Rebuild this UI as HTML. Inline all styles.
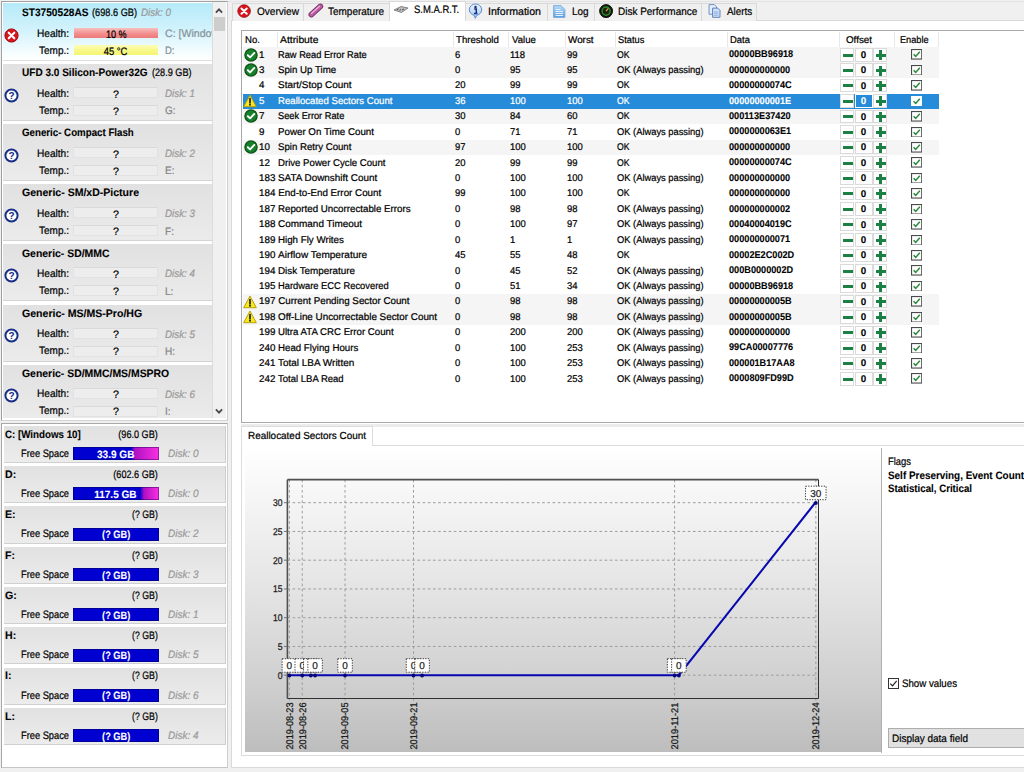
<!DOCTYPE html><html><head><meta charset="utf-8"><title>Hard Disk Sentinel</title><style>
*{box-sizing:border-box;margin:0;padding:0}
html,body{width:1024px;height:772px;overflow:hidden;background:#f0f0f0}
body{position:relative;text-rendering:geometricPrecision;font-family:"Liberation Sans",sans-serif;font-size:10px;color:#000;line-height:1}
.a{position:absolute}
.t{position:absolute;white-space:pre;line-height:12px;height:12px;-webkit-text-stroke:0.22px currentColor}
.b{font-weight:bold;-webkit-text-stroke:0.1px currentColor}
.i{font-style:italic;color:#9a9a9a}
</style></head><body>
<div class="a" style="left:1px;top:1px;width:227.2px;height:419.8px;background:#fff;border:1px solid #a0a0a0;border-right-color:#cfcfcf;border-bottom-color:#d4d4d4"></div>
<div class="a" style="left:0;top:0;width:211.600px;height:418.2px;overflow:hidden">
<div class="a" style="left:3px;top:3.0px;width:209px;height:58px;background:linear-gradient(#b5eaf9,#d4f3fc 50%,#f3fcfe 85%,#ffffff);border-bottom:1px solid #dedede"></div>
<div class="t b" style="left:21.50px;top:7.10px;font-size:10.8px;transform-origin:0 50%;transform:scaleX(0.939);">ST3750528AS</div>
<div class="t " style="left:92.00px;top:7.10px;font-size:10.8px;transform-origin:0 50%;transform:scaleX(0.852);">(698.6 GB)</div>
<div class="t i" style="left:141.00px;top:7.10px;font-size:10.8px;transform-origin:0 50%;transform:scaleX(0.909);">Disk: 0</div>
<div class="t " style="left:165.00px;top:27.90px;font-size:10.8px;transform-origin:0 50%;transform:scaleX(0.980);color:#86939a;">C: [Windows 10]</div>
<div class="t " style="left:165.00px;top:45.20px;font-size:10.8px;transform-origin:0 50%;transform:scaleX(0.880);color:#86939a;">D:</div>
<div class="t " style="left:36.50px;top:27.70px;font-size:10.8px;transform-origin:0 50%;transform:scaleX(0.935);">Health:</div>
<div class="t " style="left:38.50px;top:44.50px;font-size:10.8px;transform-origin:0 50%;transform:scaleX(0.926);">Temp.:</div>
<div class="a" style="left:73.7px;top:27.75px;width:84.3px;height:9.75px;background:linear-gradient(#f9c0c0,#f28e8e 55%,#ee7a7a)"></div>
<div class="a" style="left:73.7px;top:45.0px;width:84.3px;height:10px;background:linear-gradient(#fdfdb8,#f8f888 55%,#f5f572)"></div>
<div class="t " style="left:104.30px;top:28.60px;font-size:10.8px;transform-origin:50% 50%;transform:scaleX(0.843);">10 %</div>
<div class="t " style="left:102.04px;top:45.70px;font-size:10.8px;transform-origin:50% 50%;transform:scaleX(0.876);">45 °C</div>
<svg class="a" style="left:4.4px;top:27.5px" width="15" height="15" viewBox="0 0 15 15"><circle cx="7.5" cy="7.5" r="6.6" fill="#d8141c" stroke="#a00c12" stroke-width="1"/><path d="M4.7 4.7L10.3 10.3M10.3 4.7L4.7 10.3" stroke="#fff" stroke-width="2.1" stroke-linecap="round"/></svg>
<div class="a" style="left:3px;top:64.12px;width:209px;height:57px;background:linear-gradient(#e1e1e1,#ebebeb);border-bottom:1px solid #d4d4d4"></div>
<div class="t b" style="left:21.50px;top:67.22px;font-size:10.8px;transform-origin:0 50%;transform:scaleX(0.930);">UFD 3.0 Silicon-Power32G</div>
<div class="t " style="left:151.50px;top:67.22px;font-size:10.8px;transform-origin:0 50%;transform:scaleX(0.844);">(28.9 GB)</div>
<div class="t i" style="left:165.00px;top:88.02px;font-size:10.8px;transform-origin:0 50%;transform:scaleX(0.909);">Disk: 1</div>
<div class="t " style="left:165.00px;top:105.32px;font-size:10.8px;transform-origin:0 50%;transform:scaleX(0.930);color:#858585;">G:</div>
<div class="t " style="left:36.50px;top:87.82px;font-size:10.8px;transform-origin:0 50%;transform:scaleX(0.935);">Health:</div>
<div class="t " style="left:38.50px;top:104.62px;font-size:10.8px;transform-origin:0 50%;transform:scaleX(0.926);">Temp.:</div>
<div class="a" style="left:73px;top:87.12px;width:85px;height:11px;background:#ededed;border:1px solid #e2e2e2;border-top-color:#dadada"></div>
<div class="a" style="left:73px;top:105.12px;width:85px;height:11px;background:#ededed;border:1px solid #e2e2e2;border-top-color:#dadada"></div>
<div class="t " style="left:112.99px;top:88.72px;font-size:10.8px;">?</div>
<div class="t " style="left:112.99px;top:105.82px;font-size:10.8px;">?</div>
<svg class="a" style="left:4.4px;top:87.62px" width="15" height="15" viewBox="0 0 15 15"><circle cx="7.5" cy="7.5" r="6.1" fill="#fff" stroke="#182f86" stroke-width="2"/><text x="7.5" y="11.2" font-family="Liberation Sans,sans-serif" font-weight="bold" font-size="10" text-anchor="middle" fill="#182f86">?</text></svg>
<div class="a" style="left:3px;top:124.24px;width:209px;height:57px;background:linear-gradient(#e1e1e1,#ebebeb);border-bottom:1px solid #d4d4d4"></div>
<div class="t b" style="left:21.50px;top:127.34px;font-size:10.8px;transform-origin:0 50%;transform:scaleX(0.900);">Generic- Compact Flash</div>
<div class="t i" style="left:165.00px;top:148.14px;font-size:10.8px;transform-origin:0 50%;transform:scaleX(0.909);">Disk: 2</div>
<div class="t " style="left:165.00px;top:165.44px;font-size:10.8px;transform-origin:0 50%;transform:scaleX(0.930);color:#858585;">E:</div>
<div class="t " style="left:36.50px;top:147.94px;font-size:10.8px;transform-origin:0 50%;transform:scaleX(0.935);">Health:</div>
<div class="t " style="left:38.50px;top:164.74px;font-size:10.8px;transform-origin:0 50%;transform:scaleX(0.926);">Temp.:</div>
<div class="a" style="left:73px;top:147.24px;width:85px;height:11px;background:#ededed;border:1px solid #e2e2e2;border-top-color:#dadada"></div>
<div class="a" style="left:73px;top:165.24px;width:85px;height:11px;background:#ededed;border:1px solid #e2e2e2;border-top-color:#dadada"></div>
<div class="t " style="left:112.99px;top:148.84px;font-size:10.8px;">?</div>
<div class="t " style="left:112.99px;top:165.94px;font-size:10.8px;">?</div>
<svg class="a" style="left:4.4px;top:147.74px" width="15" height="15" viewBox="0 0 15 15"><circle cx="7.5" cy="7.5" r="6.1" fill="#fff" stroke="#182f86" stroke-width="2"/><text x="7.5" y="11.2" font-family="Liberation Sans,sans-serif" font-weight="bold" font-size="10" text-anchor="middle" fill="#182f86">?</text></svg>
<div class="a" style="left:3px;top:184.36px;width:209px;height:57px;background:linear-gradient(#e1e1e1,#ebebeb);border-bottom:1px solid #d4d4d4"></div>
<div class="t b" style="left:21.50px;top:187.46px;font-size:10.8px;transform-origin:0 50%;transform:scaleX(0.975);">Generic- SM/xD-Picture</div>
<div class="t i" style="left:165.00px;top:208.26px;font-size:10.8px;transform-origin:0 50%;transform:scaleX(0.909);">Disk: 3</div>
<div class="t " style="left:165.00px;top:225.56px;font-size:10.8px;transform-origin:0 50%;transform:scaleX(0.930);color:#858585;">F:</div>
<div class="t " style="left:36.50px;top:208.06px;font-size:10.8px;transform-origin:0 50%;transform:scaleX(0.935);">Health:</div>
<div class="t " style="left:38.50px;top:224.86px;font-size:10.8px;transform-origin:0 50%;transform:scaleX(0.926);">Temp.:</div>
<div class="a" style="left:73px;top:207.36px;width:85px;height:11px;background:#ededed;border:1px solid #e2e2e2;border-top-color:#dadada"></div>
<div class="a" style="left:73px;top:225.36px;width:85px;height:11px;background:#ededed;border:1px solid #e2e2e2;border-top-color:#dadada"></div>
<div class="t " style="left:112.99px;top:208.96px;font-size:10.8px;">?</div>
<div class="t " style="left:112.99px;top:226.06px;font-size:10.8px;">?</div>
<svg class="a" style="left:4.4px;top:207.86px" width="15" height="15" viewBox="0 0 15 15"><circle cx="7.5" cy="7.5" r="6.1" fill="#fff" stroke="#182f86" stroke-width="2"/><text x="7.5" y="11.2" font-family="Liberation Sans,sans-serif" font-weight="bold" font-size="10" text-anchor="middle" fill="#182f86">?</text></svg>
<div class="a" style="left:3px;top:244.48px;width:209px;height:57px;background:linear-gradient(#e1e1e1,#ebebeb);border-bottom:1px solid #d4d4d4"></div>
<div class="t b" style="left:21.50px;top:247.58px;font-size:10.8px;transform-origin:0 50%;transform:scaleX(0.966);">Generic- SD/MMC</div>
<div class="t i" style="left:165.00px;top:268.38px;font-size:10.8px;transform-origin:0 50%;transform:scaleX(0.909);">Disk: 4</div>
<div class="t " style="left:165.00px;top:285.68px;font-size:10.8px;transform-origin:0 50%;transform:scaleX(0.930);color:#858585;">L:</div>
<div class="t " style="left:36.50px;top:268.18px;font-size:10.8px;transform-origin:0 50%;transform:scaleX(0.935);">Health:</div>
<div class="t " style="left:38.50px;top:284.98px;font-size:10.8px;transform-origin:0 50%;transform:scaleX(0.926);">Temp.:</div>
<div class="a" style="left:73px;top:267.48px;width:85px;height:11px;background:#ededed;border:1px solid #e2e2e2;border-top-color:#dadada"></div>
<div class="a" style="left:73px;top:285.48px;width:85px;height:11px;background:#ededed;border:1px solid #e2e2e2;border-top-color:#dadada"></div>
<div class="t " style="left:112.99px;top:269.08px;font-size:10.8px;">?</div>
<div class="t " style="left:112.99px;top:286.18px;font-size:10.8px;">?</div>
<svg class="a" style="left:4.4px;top:267.98px" width="15" height="15" viewBox="0 0 15 15"><circle cx="7.5" cy="7.5" r="6.1" fill="#fff" stroke="#182f86" stroke-width="2"/><text x="7.5" y="11.2" font-family="Liberation Sans,sans-serif" font-weight="bold" font-size="10" text-anchor="middle" fill="#182f86">?</text></svg>
<div class="a" style="left:3px;top:304.6px;width:209px;height:57px;background:linear-gradient(#e1e1e1,#ebebeb);border-bottom:1px solid #d4d4d4"></div>
<div class="t b" style="left:21.50px;top:307.70px;font-size:10.8px;transform-origin:0 50%;transform:scaleX(0.977);">Generic- MS/MS-Pro/HG</div>
<div class="t i" style="left:165.00px;top:328.50px;font-size:10.8px;transform-origin:0 50%;transform:scaleX(0.909);">Disk: 5</div>
<div class="t " style="left:165.00px;top:345.80px;font-size:10.8px;transform-origin:0 50%;transform:scaleX(0.930);color:#858585;">H:</div>
<div class="t " style="left:36.50px;top:328.30px;font-size:10.8px;transform-origin:0 50%;transform:scaleX(0.935);">Health:</div>
<div class="t " style="left:38.50px;top:345.10px;font-size:10.8px;transform-origin:0 50%;transform:scaleX(0.926);">Temp.:</div>
<div class="a" style="left:73px;top:327.6px;width:85px;height:11px;background:#ededed;border:1px solid #e2e2e2;border-top-color:#dadada"></div>
<div class="a" style="left:73px;top:345.6px;width:85px;height:11px;background:#ededed;border:1px solid #e2e2e2;border-top-color:#dadada"></div>
<div class="t " style="left:112.99px;top:329.20px;font-size:10.8px;">?</div>
<div class="t " style="left:112.99px;top:346.30px;font-size:10.8px;">?</div>
<svg class="a" style="left:4.4px;top:328.1px" width="15" height="15" viewBox="0 0 15 15"><circle cx="7.5" cy="7.5" r="6.1" fill="#fff" stroke="#182f86" stroke-width="2"/><text x="7.5" y="11.2" font-family="Liberation Sans,sans-serif" font-weight="bold" font-size="10" text-anchor="middle" fill="#182f86">?</text></svg>
<div class="a" style="left:3px;top:364.72px;width:209px;height:57px;background:linear-gradient(#e1e1e1,#ebebeb);border-bottom:1px solid #d4d4d4"></div>
<div class="t b" style="left:21.50px;top:367.82px;font-size:10.8px;transform-origin:0 50%;transform:scaleX(0.966);">Generic- SD/MMC/MS/MSPRO</div>
<div class="t i" style="left:165.00px;top:388.62px;font-size:10.8px;transform-origin:0 50%;transform:scaleX(0.909);">Disk: 6</div>
<div class="t " style="left:165.00px;top:405.92px;font-size:10.8px;transform-origin:0 50%;transform:scaleX(0.930);color:#858585;">I:</div>
<div class="t " style="left:36.50px;top:388.42px;font-size:10.8px;transform-origin:0 50%;transform:scaleX(0.935);">Health:</div>
<div class="t " style="left:38.50px;top:405.22px;font-size:10.8px;transform-origin:0 50%;transform:scaleX(0.926);">Temp.:</div>
<div class="a" style="left:73px;top:387.72px;width:85px;height:11px;background:#ededed;border:1px solid #e2e2e2;border-top-color:#dadada"></div>
<div class="a" style="left:73px;top:405.72px;width:85px;height:11px;background:#ededed;border:1px solid #e2e2e2;border-top-color:#dadada"></div>
<div class="t " style="left:112.99px;top:389.32px;font-size:10.8px;">?</div>
<div class="t " style="left:112.99px;top:406.42px;font-size:10.8px;">?</div>
<svg class="a" style="left:4.4px;top:388.22px" width="15" height="15" viewBox="0 0 15 15"><circle cx="7.5" cy="7.5" r="6.1" fill="#fff" stroke="#182f86" stroke-width="2"/><text x="7.5" y="11.2" font-family="Liberation Sans,sans-serif" font-weight="bold" font-size="10" text-anchor="middle" fill="#182f86">?</text></svg>
</div>
<div class="a" style="left:211.8px;top:2px;width:14.3px;height:416.2px;background:#f0f0f0;border-left:1px solid #dcdcdc"></div>
<div class="a" style="left:213.5px;top:17.2px;width:11.8px;height:14px;background:#cdcdcd"></div>
<svg class="a" style="left:214px;top:6.5px" width="10" height="8" viewBox="0 0 10 8"><path d="M1.900 5.600L5 2.400L8.100 5.600" fill="none" stroke="#484848" stroke-width="1.800"/></svg>
<svg class="a" style="left:214px;top:407.3px" width="10" height="8" viewBox="0 0 10 8"><path d="M1.900 2.400L5 5.600L8.100 2.400" fill="none" stroke="#484848" stroke-width="1.800"/></svg>
<div class="a" style="left:1px;top:422.7px;width:227.2px;height:345.3px;background:#fff;border:1px solid #a8a8a8;border-right-color:#cfcfcf;border-bottom-color:#c4c4c4"></div>
<div class="a" style="left:3.5px;top:425.7px;width:222.5px;height:37.3px;background:linear-gradient(#e1e1e1,#ececec);border-bottom:1px solid #d0d0d0;border-right:1px solid #cdcdcd"></div>
<div class="t b" style="left:5.20px;top:428.60px;font-size:10.8px;transform-origin:0 50%;transform:scaleX(0.903);">C: [Windows 10]</div>
<div class="t " style="left:111.44px;top:428.60px;font-size:10.8px;transform-origin:100% 50%;transform:scaleX(0.844);">(96.0 GB)</div>
<div class="t " style="left:20.50px;top:447.75px;font-size:10.8px;transform-origin:0 50%;transform:scaleX(0.860);">Free Space</div>
<div class="a" style="left:73px;top:447.0px;width:85.5px;height:13px;background:linear-gradient(90deg,#0000d0 0,#0000d0 58px,#b010c4 62px,#f830e0 85.500px);box-shadow:inset 0 0 0 1px rgba(0,0,70,.4)"></div>
<div class="t b" style="left:96.02px;top:448.60px;font-size:10.6px;transform-origin:50% 50%;transform:scaleX(0.950);color:#fff;">33.9 GB</div>
<div class="t i" style="left:167.50px;top:447.75px;font-size:10.8px;transform-origin:0 50%;transform:scaleX(0.924);">Disk: 0</div>
<div class="a" style="left:3.5px;top:466.0px;width:222.5px;height:37.3px;background:linear-gradient(#e1e1e1,#ececec);border-bottom:1px solid #d0d0d0;border-right:1px solid #cdcdcd"></div>
<div class="t b" style="left:5.20px;top:468.90px;font-size:10.8px;transform-origin:0 50%;transform:scaleX(0.980);">D:</div>
<div class="t " style="left:105.44px;top:468.90px;font-size:10.8px;transform-origin:100% 50%;transform:scaleX(0.843);">(602.6 GB)</div>
<div class="t " style="left:20.50px;top:488.05px;font-size:10.8px;transform-origin:0 50%;transform:scaleX(0.860);">Free Space</div>
<div class="a" style="left:73px;top:487.3px;width:85.5px;height:13px;background:linear-gradient(90deg,#0000d0 0,#0000d0 67px,#b010c4 71px,#f830e0 85.500px);box-shadow:inset 0 0 0 1px rgba(0,0,70,.4)"></div>
<div class="t b" style="left:93.37px;top:488.90px;font-size:10.6px;transform-origin:50% 50%;transform:scaleX(0.949);color:#fff;">117.5 GB</div>
<div class="t i" style="left:167.50px;top:488.05px;font-size:10.8px;transform-origin:0 50%;transform:scaleX(0.924);">Disk: 0</div>
<div class="a" style="left:3.5px;top:506.3px;width:222.5px;height:37.3px;background:linear-gradient(#e1e1e1,#ececec);border-bottom:1px solid #d0d0d0;border-right:1px solid #cdcdcd"></div>
<div class="t b" style="left:5.20px;top:509.20px;font-size:10.8px;transform-origin:0 50%;transform:scaleX(0.980);">E:</div>
<div class="t " style="left:126.45px;top:509.20px;font-size:10.8px;transform-origin:100% 50%;transform:scaleX(0.810);">(? GB)</div>
<div class="t " style="left:20.50px;top:528.35px;font-size:10.8px;transform-origin:0 50%;transform:scaleX(0.860);">Free Space</div>
<div class="a" style="left:73px;top:527.6px;width:85.5px;height:13px;background:#0000d0;box-shadow:inset 0 0 0 1px rgba(0,0,70,.4)"></div>
<div class="t b" style="left:99.56px;top:529.20px;font-size:10.6px;transform-origin:50% 50%;transform:scaleX(0.873);color:#fff;">(? GB)</div>
<div class="t i" style="left:167.50px;top:528.35px;font-size:10.8px;transform-origin:0 50%;transform:scaleX(0.924);">Disk: 2</div>
<div class="a" style="left:3.5px;top:546.6px;width:222.5px;height:37.3px;background:linear-gradient(#e1e1e1,#ececec);border-bottom:1px solid #d0d0d0;border-right:1px solid #cdcdcd"></div>
<div class="t b" style="left:5.20px;top:549.50px;font-size:10.8px;transform-origin:0 50%;transform:scaleX(0.980);">F:</div>
<div class="t " style="left:126.45px;top:549.50px;font-size:10.8px;transform-origin:100% 50%;transform:scaleX(0.810);">(? GB)</div>
<div class="t " style="left:20.50px;top:568.65px;font-size:10.8px;transform-origin:0 50%;transform:scaleX(0.860);">Free Space</div>
<div class="a" style="left:73px;top:567.9px;width:85.5px;height:13px;background:#0000d0;box-shadow:inset 0 0 0 1px rgba(0,0,70,.4)"></div>
<div class="t b" style="left:99.56px;top:569.50px;font-size:10.6px;transform-origin:50% 50%;transform:scaleX(0.873);color:#fff;">(? GB)</div>
<div class="t i" style="left:167.50px;top:568.65px;font-size:10.8px;transform-origin:0 50%;transform:scaleX(0.924);">Disk: 3</div>
<div class="a" style="left:3.5px;top:586.9000000000001px;width:222.5px;height:37.3px;background:linear-gradient(#e1e1e1,#ececec);border-bottom:1px solid #d0d0d0;border-right:1px solid #cdcdcd"></div>
<div class="t b" style="left:5.20px;top:589.80px;font-size:10.8px;transform-origin:0 50%;transform:scaleX(0.980);">G:</div>
<div class="t " style="left:126.45px;top:589.80px;font-size:10.8px;transform-origin:100% 50%;transform:scaleX(0.810);">(? GB)</div>
<div class="t " style="left:20.50px;top:608.95px;font-size:10.8px;transform-origin:0 50%;transform:scaleX(0.860);">Free Space</div>
<div class="a" style="left:73px;top:608.2px;width:85.5px;height:13px;background:#0000d0;box-shadow:inset 0 0 0 1px rgba(0,0,70,.4)"></div>
<div class="t b" style="left:99.56px;top:609.80px;font-size:10.6px;transform-origin:50% 50%;transform:scaleX(0.873);color:#fff;">(? GB)</div>
<div class="t i" style="left:167.50px;top:608.95px;font-size:10.8px;transform-origin:0 50%;transform:scaleX(0.924);">Disk: 1</div>
<div class="a" style="left:3.5px;top:627.2px;width:222.5px;height:37.3px;background:linear-gradient(#e1e1e1,#ececec);border-bottom:1px solid #d0d0d0;border-right:1px solid #cdcdcd"></div>
<div class="t b" style="left:5.20px;top:630.10px;font-size:10.8px;transform-origin:0 50%;transform:scaleX(0.980);">H:</div>
<div class="t " style="left:126.45px;top:630.10px;font-size:10.8px;transform-origin:100% 50%;transform:scaleX(0.810);">(? GB)</div>
<div class="t " style="left:20.50px;top:649.25px;font-size:10.8px;transform-origin:0 50%;transform:scaleX(0.860);">Free Space</div>
<div class="a" style="left:73px;top:648.5px;width:85.5px;height:13px;background:#0000d0;box-shadow:inset 0 0 0 1px rgba(0,0,70,.4)"></div>
<div class="t b" style="left:99.56px;top:650.10px;font-size:10.6px;transform-origin:50% 50%;transform:scaleX(0.873);color:#fff;">(? GB)</div>
<div class="t i" style="left:167.50px;top:649.25px;font-size:10.8px;transform-origin:0 50%;transform:scaleX(0.924);">Disk: 5</div>
<div class="a" style="left:3.5px;top:667.5px;width:222.5px;height:37.3px;background:linear-gradient(#e1e1e1,#ececec);border-bottom:1px solid #d0d0d0;border-right:1px solid #cdcdcd"></div>
<div class="t b" style="left:5.20px;top:670.40px;font-size:10.8px;transform-origin:0 50%;transform:scaleX(0.980);">I:</div>
<div class="t " style="left:126.45px;top:670.40px;font-size:10.8px;transform-origin:100% 50%;transform:scaleX(0.810);">(? GB)</div>
<div class="t " style="left:20.50px;top:689.55px;font-size:10.8px;transform-origin:0 50%;transform:scaleX(0.860);">Free Space</div>
<div class="a" style="left:73px;top:688.8px;width:85.5px;height:13px;background:#0000d0;box-shadow:inset 0 0 0 1px rgba(0,0,70,.4)"></div>
<div class="t b" style="left:99.56px;top:690.40px;font-size:10.6px;transform-origin:50% 50%;transform:scaleX(0.873);color:#fff;">(? GB)</div>
<div class="t i" style="left:167.50px;top:689.55px;font-size:10.8px;transform-origin:0 50%;transform:scaleX(0.924);">Disk: 6</div>
<div class="a" style="left:3.5px;top:707.8px;width:222.5px;height:37.3px;background:linear-gradient(#e1e1e1,#ececec);border-bottom:1px solid #d0d0d0;border-right:1px solid #cdcdcd"></div>
<div class="t b" style="left:5.20px;top:710.70px;font-size:10.8px;transform-origin:0 50%;transform:scaleX(0.980);">L:</div>
<div class="t " style="left:126.45px;top:710.70px;font-size:10.8px;transform-origin:100% 50%;transform:scaleX(0.810);">(? GB)</div>
<div class="t " style="left:20.50px;top:729.85px;font-size:10.8px;transform-origin:0 50%;transform:scaleX(0.860);">Free Space</div>
<div class="a" style="left:73px;top:729.0999999999999px;width:85.5px;height:13px;background:#0000d0;box-shadow:inset 0 0 0 1px rgba(0,0,70,.4)"></div>
<div class="t b" style="left:99.56px;top:730.70px;font-size:10.6px;transform-origin:50% 50%;transform:scaleX(0.873);color:#fff;">(? GB)</div>
<div class="t i" style="left:167.50px;top:729.85px;font-size:10.8px;transform-origin:0 50%;transform:scaleX(0.924);">Disk: 4</div>
<div class="a" style="left:228px;top:0px;width:796px;height:772px;background:#f0f0f0"></div>
<div class="a" style="left:228px;top:1px;width:796px;height:1px;background:#e3e3e3"></div>
<div class="a" style="left:230.5px;top:20px;width:800px;height:748px;background:#fff;border:1px solid #d9d9d9"></div>
<div class="a" style="left:232px;top:3px;width:72px;height:17.5px;background:#f0f0f0;border:1px solid #d9d9d9;border-bottom:none"></div>
<div class="t " style="left:256.50px;top:5.50px;font-size:10.8px;transform-origin:0 50%;transform:scaleX(0.933);">Overview</div>
<div class="a" style="left:303px;top:3px;width:87px;height:17.5px;background:#f0f0f0;border:1px solid #d9d9d9;border-bottom:none"></div>
<div class="t " style="left:328.00px;top:5.50px;font-size:10.8px;transform-origin:0 50%;transform:scaleX(0.924);">Temperature</div>
<div class="a" style="left:388.5px;top:0.5px;width:77.0px;height:20.5px;background:#fff;border:1px solid #d9d9d9;border-bottom:none"></div>
<div class="t " style="left:413.70px;top:4.00px;font-size:10.8px;transform-origin:0 50%;transform:scaleX(0.876);">S.M.A.R.T.</div>
<div class="a" style="left:465px;top:3px;width:82.5px;height:17.5px;background:#f0f0f0;border:1px solid #d9d9d9;border-bottom:none"></div>
<div class="t " style="left:488.00px;top:5.50px;font-size:10.8px;transform-origin:0 50%;transform:scaleX(0.981);">Information</div>
<div class="a" style="left:546.5px;top:3px;width:48.0px;height:17.5px;background:#f0f0f0;border:1px solid #d9d9d9;border-bottom:none"></div>
<div class="t " style="left:571.50px;top:5.50px;font-size:10.8px;transform-origin:0 50%;transform:scaleX(0.916);">Log</div>
<div class="a" style="left:593.5px;top:3px;width:108.0px;height:17.5px;background:#f0f0f0;border:1px solid #d9d9d9;border-bottom:none"></div>
<div class="t " style="left:618.00px;top:5.50px;font-size:10.8px;transform-origin:0 50%;transform:scaleX(0.924);">Disk Performance</div>
<div class="a" style="left:700.5px;top:3px;width:56.5px;height:17.5px;background:#f0f0f0;border:1px solid #d9d9d9;border-bottom:none"></div>
<div class="t " style="left:727.00px;top:5.50px;font-size:10.8px;transform-origin:0 50%;transform:scaleX(0.913);">Alerts</div>
<svg class="a" style="left:237.3px;top:3.6px" width="14.2" height="14.2" viewBox="0 0 15 15"><circle cx="7.5" cy="7.5" r="6.6" fill="#d8141c" stroke="#a00c12" stroke-width="1"/><path d="M4.7 4.7L10.3 10.3M10.3 4.7L4.7 10.3" stroke="#fff" stroke-width="2.1" stroke-linecap="round"/></svg>
<svg class="a" style="left:307px;top:2px" width="18" height="17" viewBox="0 0 18 17"><path d="M4.3 12.6L13.4 4.4" stroke="#7a3468" stroke-width="5.6" stroke-linecap="round"/><path d="M4.3 12.6L13.4 4.4" stroke="#c05ca6" stroke-width="3.8" stroke-linecap="round"/><path d="M4.6 11.2L12.4 4.2" stroke="#e8b4dc" stroke-width="1.3" stroke-linecap="round"/></svg>
<svg class="a" style="left:393px;top:4px" width="16" height="10" viewBox="0 0 16 10"><path d="M1 6L8 2.5L15 4L8.5 8.5z" fill="#bdbdbd" stroke="#6e6e6e" stroke-width=".8"/><path d="M4 5.7l1.5-.7M6.5 6.3l1.5-.8M9 6l2-1" stroke="#444" stroke-width=".9"/></svg>
<svg class="a" style="left:468.3px;top:2.6px" width="15" height="16" viewBox="0 0 15 16"><defs><linearGradient id="ig" x1="0" y1="0" x2="0" y2="1"><stop offset="0" stop-color="#eef6ff"/><stop offset="1" stop-color="#9cc4f0"/></linearGradient></defs><path d="M7.5 1A6.2 5.7 0 0 1 8.8 12.27L7.3 15.3L6.2 12.27A6.2 5.7 0 0 1 7.5 1z" fill="url(#ig)" stroke="#5a8ad0" stroke-width="1"/><circle cx="7.5" cy="3.900" r="1.250" fill="#14307c"/><path d="M6.200 6.100h2.100v4.300M6 10.500h3.400" stroke="#14307c" stroke-width="1.500" fill="none"/></svg>
<svg class="a" style="left:553px;top:5.3px" width="12.500" height="13" viewBox="0 0 12.500 13"><defs><linearGradient id="lg" x1="0" y1="0" x2="0" y2="1"><stop offset="0" stop-color="#b8dcf6"/><stop offset="1" stop-color="#5c9ce0"/></linearGradient></defs><path d="M.6 .6h7.400l3.900 3.900v7.900H.6z" fill="url(#lg)" stroke="#74a8e0" stroke-width=".9"/><path d="M2.500 4.500h5M2.500 6.500h7.500M2.500 8.500h7.500M2.500 10.500h7.500" stroke="#e4f0fc" stroke-width="1"/></svg>
<svg class="a" style="left:598.600px;top:3.600px" width="14.200" height="14.200" viewBox="0 0 16 16"><circle cx="8" cy="8" r="7.300" fill="#10180c" stroke="#050505" stroke-width="1"/><circle cx="8" cy="8" r="4.600" fill="#18240f" stroke="#2c8a30" stroke-width="1.600"/><path d="M8 8L10.500 5" stroke="#f0a040" stroke-width="1.300"/></svg>
<svg class="a" style="left:708px;top:4.200px" width="13.500" height="14" viewBox="0 0 15 16"><path d="M1 .7h6l2.500 2.500v8.500H1z" fill="#e4eefa" stroke="#6a8cc4" stroke-width="1.100"/><path d="M5 4.700h6l2.500 2.500v8H5z" fill="#cfe0f6" stroke="#5a80bc" stroke-width="1.100"/><path d="M6.500 9h5M6.500 11h5M6.500 13h5" stroke="#8ab0e4" stroke-width="1"/></svg>
<div class="a" style="left:241px;top:30px;width:800px;height:392.5px;background:#fff;border:1px solid #a8a8a8"></div>
<div class="t " style="left:245.00px;top:35.10px;font-size:9.8px;transform-origin:0 50%;transform:scaleX(0.972);">No.</div>
<div class="t " style="left:280.00px;top:35.10px;font-size:9.8px;transform-origin:0 50%;transform:scaleX(1.055);">Attribute</div>
<div class="t " style="left:456.00px;top:35.10px;font-size:9.8px;transform-origin:0 50%;transform:scaleX(0.983);">Threshold</div>
<div class="t " style="left:511.50px;top:35.10px;font-size:9.8px;transform-origin:0 50%;transform:scaleX(0.981);">Value</div>
<div class="t " style="left:568.00px;top:35.10px;font-size:9.8px;transform-origin:0 50%;transform:scaleX(1.007);">Worst</div>
<div class="t " style="left:617.50px;top:35.10px;font-size:9.8px;transform-origin:0 50%;transform:scaleX(0.948);">Status</div>
<div class="t " style="left:730.00px;top:35.10px;font-size:9.8px;transform-origin:0 50%;transform:scaleX(0.960);">Data</div>
<div class="t " style="left:846.00px;top:35.10px;font-size:9.8px;">Offset</div>
<div class="t " style="left:900.00px;top:35.10px;font-size:9.8px;transform-origin:0 50%;transform:scaleX(0.937);">Enable</div>
<div class="a" style="left:277px;top:32px;width:1px;height:14.5px;background:#e8e8e8"></div>
<div class="a" style="left:453px;top:32px;width:1px;height:14.5px;background:#e8e8e8"></div>
<div class="a" style="left:508px;top:32px;width:1px;height:14.5px;background:#e8e8e8"></div>
<div class="a" style="left:565px;top:32px;width:1px;height:14.5px;background:#e8e8e8"></div>
<div class="a" style="left:615px;top:32px;width:1px;height:14.5px;background:#e8e8e8"></div>
<div class="a" style="left:727px;top:32px;width:1px;height:14.5px;background:#e8e8e8"></div>
<div class="a" style="left:839px;top:32px;width:1px;height:14.5px;background:#e8e8e8"></div>
<div class="a" style="left:894px;top:32px;width:1px;height:14.5px;background:#e8e8e8"></div>
<div class="a" style="left:938px;top:32px;width:1px;height:14.5px;background:#e8e8e8"></div>
<div class="a" style="left:243px;top:47.0px;width:696px;height:15.43px;background:#f5f5f5"></div>
<svg class="a" style="left:243.5px;top:47.5px" width="14" height="14" viewBox="0 0 14 14"><circle cx="7" cy="7" r="6.1" fill="#17802a" stroke="#0b5316" stroke-width="1.3"/><path d="M3.800 7.200L6.100 9.400L10.300 4.900" fill="none" stroke="#fff" stroke-width="1.9" stroke-linecap="round" stroke-linejoin="round"/></svg>
<div class="t " style="left:259.00px;top:49.50px;font-size:9.8px;">1</div>
<div class="t " style="left:278.30px;top:49.50px;font-size:9.8px;transform-origin:0 50%;transform:scaleX(0.947);">Raw Read Error Rate</div>
<div class="t " style="left:454.70px;top:49.50px;font-size:9.8px;transform-origin:0 50%;transform:scaleX(0.965);">6</div>
<div class="t " style="left:510.30px;top:49.50px;font-size:9.8px;transform-origin:0 50%;transform:scaleX(0.965);">118</div>
<div class="t " style="left:566.80px;top:49.50px;font-size:9.8px;transform-origin:0 50%;transform:scaleX(0.965);">99</div>
<div class="t " style="left:616.80px;top:49.50px;font-size:9.8px;transform-origin:0 50%;transform:scaleX(0.885);">OK</div>
<div class="t b" style="left:728.80px;top:49.30px;font-size:9.8px;transform-origin:0 50%;transform:scaleX(0.935);">00000BB96918</div>
<div class="a" style="left:840px;top:48.0px;width:14px;height:13.5px;background:#fff;border:1px solid #dadada"><div class="a" style="left:1.5px;top:4.6px;width:10px;height:3px;background:#1b8044"></div></div>
<div class="a" style="left:854.5px;top:48.0px;width:18px;height:13.5px;background:#fff;border:1px solid #dadada;"></div>
<div class="t b" style="left:860.77px;top:49.80px;font-size:9.8px;">0</div>
<div class="a" style="left:873px;top:48.0px;width:14px;height:13.5px;background:#fff;border:1px solid #dadada"><div class="a" style="left:1.5px;top:4.6px;width:10px;height:3px;background:#1b8044"></div><div class="a" style="left:5px;top:1.1px;width:3px;height:10px;background:#1b8044"></div></div>
<svg class="a" style="left:910.6px;top:49.4px" width="11.3" height="10.6" viewBox="0 0 11.3 10.6"><rect x=".55" y=".55" width="10.2" height="9.5" fill="#fff" stroke="#4a4a4a" stroke-width="1.1"/><path d="M2.6 5.3L4.7 7.4L8.8 2.8" fill="none" stroke="#2a8a3a" stroke-width="1.5"/></svg>
<div class="a" style="left:243px;top:62.43px;width:696px;height:15.43px;background:#f5f5f5"></div>
<svg class="a" style="left:243.5px;top:62.93px" width="14" height="14" viewBox="0 0 14 14"><circle cx="7" cy="7" r="6.1" fill="#17802a" stroke="#0b5316" stroke-width="1.3"/><path d="M3.800 7.200L6.100 9.400L10.300 4.900" fill="none" stroke="#fff" stroke-width="1.9" stroke-linecap="round" stroke-linejoin="round"/></svg>
<div class="t " style="left:259.00px;top:64.93px;font-size:9.8px;">3</div>
<div class="t " style="left:278.30px;top:64.93px;font-size:9.8px;transform-origin:0 50%;transform:scaleX(0.988);">Spin Up Time</div>
<div class="t " style="left:454.70px;top:64.93px;font-size:9.8px;transform-origin:0 50%;transform:scaleX(0.965);">0</div>
<div class="t " style="left:510.30px;top:64.93px;font-size:9.8px;transform-origin:0 50%;transform:scaleX(0.965);">95</div>
<div class="t " style="left:566.80px;top:64.93px;font-size:9.8px;transform-origin:0 50%;transform:scaleX(0.965);">95</div>
<div class="t " style="left:616.80px;top:64.93px;font-size:9.8px;transform-origin:0 50%;transform:scaleX(0.952);">OK (Always passing)</div>
<div class="t b" style="left:728.80px;top:64.73px;font-size:9.8px;transform-origin:0 50%;transform:scaleX(0.935);">000000000000</div>
<div class="a" style="left:840px;top:63.43px;width:14px;height:13.5px;background:#fff;border:1px solid #dadada"><div class="a" style="left:1.5px;top:4.6px;width:10px;height:3px;background:#1b8044"></div></div>
<div class="a" style="left:854.5px;top:63.43px;width:18px;height:13.5px;background:#fff;border:1px solid #dadada;"></div>
<div class="t b" style="left:860.77px;top:65.23px;font-size:9.8px;">0</div>
<div class="a" style="left:873px;top:63.43px;width:14px;height:13.5px;background:#fff;border:1px solid #dadada"><div class="a" style="left:1.5px;top:4.6px;width:10px;height:3px;background:#1b8044"></div><div class="a" style="left:5px;top:1.1px;width:3px;height:10px;background:#1b8044"></div></div>
<svg class="a" style="left:910.6px;top:64.83px" width="11.3" height="10.6" viewBox="0 0 11.3 10.6"><rect x=".55" y=".55" width="10.2" height="9.5" fill="#fff" stroke="#4a4a4a" stroke-width="1.1"/><path d="M2.6 5.3L4.7 7.4L8.8 2.8" fill="none" stroke="#2a8a3a" stroke-width="1.5"/></svg>
<div class="t " style="left:259.00px;top:80.36px;font-size:9.8px;">4</div>
<div class="t " style="left:278.30px;top:80.36px;font-size:9.8px;transform-origin:0 50%;transform:scaleX(1.015);">Start/Stop Count</div>
<div class="t " style="left:454.70px;top:80.36px;font-size:9.8px;transform-origin:0 50%;transform:scaleX(0.965);">20</div>
<div class="t " style="left:510.30px;top:80.36px;font-size:9.8px;transform-origin:0 50%;transform:scaleX(0.965);">99</div>
<div class="t " style="left:566.80px;top:80.36px;font-size:9.8px;transform-origin:0 50%;transform:scaleX(0.965);">99</div>
<div class="t " style="left:616.80px;top:80.36px;font-size:9.8px;transform-origin:0 50%;transform:scaleX(0.885);">OK</div>
<div class="t b" style="left:728.80px;top:80.16px;font-size:9.8px;transform-origin:0 50%;transform:scaleX(0.935);">00000000074C</div>
<div class="a" style="left:840px;top:78.86px;width:14px;height:13.5px;background:#fff;border:1px solid #dadada"><div class="a" style="left:1.5px;top:4.6px;width:10px;height:3px;background:#1b8044"></div></div>
<div class="a" style="left:854.5px;top:78.86px;width:18px;height:13.5px;background:#fff;border:1px solid #dadada;"></div>
<div class="t b" style="left:860.77px;top:80.66px;font-size:9.8px;">0</div>
<div class="a" style="left:873px;top:78.86px;width:14px;height:13.5px;background:#fff;border:1px solid #dadada"><div class="a" style="left:1.5px;top:4.6px;width:10px;height:3px;background:#1b8044"></div><div class="a" style="left:5px;top:1.1px;width:3px;height:10px;background:#1b8044"></div></div>
<svg class="a" style="left:910.6px;top:80.26px" width="11.3" height="10.6" viewBox="0 0 11.3 10.6"><rect x=".55" y=".55" width="10.2" height="9.5" fill="#fff" stroke="#4a4a4a" stroke-width="1.1"/><path d="M2.6 5.3L4.7 7.4L8.8 2.8" fill="none" stroke="#2a8a3a" stroke-width="1.5"/></svg>
<div class="a" style="left:243px;top:93.74px;width:696px;height:14.98px;background:#268bd8"></div>
<svg class="a" style="left:243px;top:93.99px" width="14" height="14" viewBox="0 0 14 14"><path d="M7 1L13.300 12.700H.7z" fill="#f8e81c" stroke="#b09800" stroke-width=".9" stroke-linejoin="round"/><path d="M7 4.500v4.300" stroke="#222" stroke-width="1.700" stroke-linecap="round"/><circle cx="7" cy="10.800" r="1" fill="#222"/></svg>
<div class="t " style="left:259.00px;top:95.79px;font-size:9.8px;color:#fff;">5</div>
<div class="t " style="left:278.30px;top:95.79px;font-size:9.8px;transform-origin:0 50%;transform:scaleX(0.982);color:#fff;">Reallocated Sectors Count</div>
<div class="t " style="left:454.70px;top:95.79px;font-size:9.8px;transform-origin:0 50%;transform:scaleX(0.965);color:#fff;">36</div>
<div class="t " style="left:510.30px;top:95.79px;font-size:9.8px;transform-origin:0 50%;transform:scaleX(0.965);color:#fff;">100</div>
<div class="t " style="left:566.80px;top:95.79px;font-size:9.8px;transform-origin:0 50%;transform:scaleX(0.965);color:#fff;">100</div>
<div class="t " style="left:616.80px;top:95.79px;font-size:9.8px;transform-origin:0 50%;transform:scaleX(0.885);color:#fff;">OK</div>
<div class="t b" style="left:728.80px;top:95.59px;font-size:9.8px;transform-origin:0 50%;transform:scaleX(0.935);color:#fff;">00000000001E</div>
<div class="a" style="left:840px;top:94.29px;width:14px;height:13.5px;background:#fff;border:1px solid #dadada"><div class="a" style="left:1.5px;top:4.6px;width:10px;height:3px;background:#1b8044"></div></div>
<div class="a" style="left:854.5px;top:94.29px;width:18px;height:13.5px;background:#268bd8;border:1px solid #fff;"></div>
<div class="t b" style="left:860.77px;top:96.09px;font-size:9.8px;color:#fff;">0</div>
<div class="a" style="left:873px;top:94.29px;width:14px;height:13.5px;background:#fff;border:1px solid #dadada"><div class="a" style="left:1.5px;top:4.6px;width:10px;height:3px;background:#1b8044"></div><div class="a" style="left:5px;top:1.1px;width:3px;height:10px;background:#1b8044"></div></div>
<svg class="a" style="left:910.6px;top:95.69px" width="11.3" height="10.6" viewBox="0 0 11.3 10.6"><rect x=".55" y=".55" width="10.2" height="9.5" fill="#fff" stroke="#fff" stroke-width="1.1"/><path d="M2.6 5.3L4.7 7.4L8.8 2.8" fill="none" stroke="#2a8a3a" stroke-width="1.5"/></svg>
<div class="a" style="left:243px;top:108.72px;width:696px;height:15.43px;background:#f5f5f5"></div>
<svg class="a" style="left:243.5px;top:109.22px" width="14" height="14" viewBox="0 0 14 14"><circle cx="7" cy="7" r="6.1" fill="#17802a" stroke="#0b5316" stroke-width="1.3"/><path d="M3.800 7.200L6.100 9.400L10.300 4.900" fill="none" stroke="#fff" stroke-width="1.9" stroke-linecap="round" stroke-linejoin="round"/></svg>
<div class="t " style="left:259.00px;top:111.22px;font-size:9.8px;">7</div>
<div class="t " style="left:278.30px;top:111.22px;font-size:9.8px;transform-origin:0 50%;transform:scaleX(0.944);">Seek Error Rate</div>
<div class="t " style="left:454.70px;top:111.22px;font-size:9.8px;transform-origin:0 50%;transform:scaleX(0.965);">30</div>
<div class="t " style="left:510.30px;top:111.22px;font-size:9.8px;transform-origin:0 50%;transform:scaleX(0.965);">84</div>
<div class="t " style="left:566.80px;top:111.22px;font-size:9.8px;transform-origin:0 50%;transform:scaleX(0.965);">60</div>
<div class="t " style="left:616.80px;top:111.22px;font-size:9.8px;transform-origin:0 50%;transform:scaleX(0.885);">OK</div>
<div class="t b" style="left:728.80px;top:111.02px;font-size:9.8px;transform-origin:0 50%;transform:scaleX(0.935);">000113E37420</div>
<div class="a" style="left:840px;top:109.72px;width:14px;height:13.5px;background:#fff;border:1px solid #dadada"><div class="a" style="left:1.5px;top:4.6px;width:10px;height:3px;background:#1b8044"></div></div>
<div class="a" style="left:854.5px;top:109.72px;width:18px;height:13.5px;background:#fff;border:1px solid #dadada;"></div>
<div class="t b" style="left:860.77px;top:111.52px;font-size:9.8px;">0</div>
<div class="a" style="left:873px;top:109.72px;width:14px;height:13.5px;background:#fff;border:1px solid #dadada"><div class="a" style="left:1.5px;top:4.6px;width:10px;height:3px;background:#1b8044"></div><div class="a" style="left:5px;top:1.1px;width:3px;height:10px;background:#1b8044"></div></div>
<svg class="a" style="left:910.6px;top:111.12px" width="11.3" height="10.6" viewBox="0 0 11.3 10.6"><rect x=".55" y=".55" width="10.2" height="9.5" fill="#fff" stroke="#4a4a4a" stroke-width="1.1"/><path d="M2.6 5.3L4.7 7.4L8.8 2.8" fill="none" stroke="#2a8a3a" stroke-width="1.5"/></svg>
<div class="t " style="left:259.00px;top:126.65px;font-size:9.8px;">9</div>
<div class="t " style="left:278.30px;top:126.65px;font-size:9.8px;transform-origin:0 50%;transform:scaleX(0.996);">Power On Time Count</div>
<div class="t " style="left:454.70px;top:126.65px;font-size:9.8px;transform-origin:0 50%;transform:scaleX(0.965);">0</div>
<div class="t " style="left:510.30px;top:126.65px;font-size:9.8px;transform-origin:0 50%;transform:scaleX(0.965);">71</div>
<div class="t " style="left:566.80px;top:126.65px;font-size:9.8px;transform-origin:0 50%;transform:scaleX(0.965);">71</div>
<div class="t " style="left:616.80px;top:126.65px;font-size:9.8px;transform-origin:0 50%;transform:scaleX(0.952);">OK (Always passing)</div>
<div class="t b" style="left:728.80px;top:126.45px;font-size:9.8px;transform-origin:0 50%;transform:scaleX(0.935);">0000000063E1</div>
<div class="a" style="left:840px;top:125.15px;width:14px;height:13.5px;background:#fff;border:1px solid #dadada"><div class="a" style="left:1.5px;top:4.6px;width:10px;height:3px;background:#1b8044"></div></div>
<div class="a" style="left:854.5px;top:125.15px;width:18px;height:13.5px;background:#fff;border:1px solid #dadada;"></div>
<div class="t b" style="left:860.77px;top:126.95px;font-size:9.8px;">0</div>
<div class="a" style="left:873px;top:125.15px;width:14px;height:13.5px;background:#fff;border:1px solid #dadada"><div class="a" style="left:1.5px;top:4.6px;width:10px;height:3px;background:#1b8044"></div><div class="a" style="left:5px;top:1.1px;width:3px;height:10px;background:#1b8044"></div></div>
<svg class="a" style="left:910.6px;top:126.55px" width="11.3" height="10.6" viewBox="0 0 11.3 10.6"><rect x=".55" y=".55" width="10.2" height="9.5" fill="#fff" stroke="#4a4a4a" stroke-width="1.1"/><path d="M2.6 5.3L4.7 7.4L8.8 2.8" fill="none" stroke="#2a8a3a" stroke-width="1.5"/></svg>
<div class="a" style="left:243px;top:139.57999999999998px;width:696px;height:15.43px;background:#f5f5f5"></div>
<svg class="a" style="left:243.5px;top:140.08px" width="14" height="14" viewBox="0 0 14 14"><circle cx="7" cy="7" r="6.1" fill="#17802a" stroke="#0b5316" stroke-width="1.3"/><path d="M3.800 7.200L6.100 9.400L10.300 4.900" fill="none" stroke="#fff" stroke-width="1.9" stroke-linecap="round" stroke-linejoin="round"/></svg>
<div class="t " style="left:259.00px;top:142.08px;font-size:9.8px;">10</div>
<div class="t " style="left:278.30px;top:142.08px;font-size:9.8px;transform-origin:0 50%;transform:scaleX(0.984);">Spin Retry Count</div>
<div class="t " style="left:454.70px;top:142.08px;font-size:9.8px;transform-origin:0 50%;transform:scaleX(0.965);">97</div>
<div class="t " style="left:510.30px;top:142.08px;font-size:9.8px;transform-origin:0 50%;transform:scaleX(0.965);">100</div>
<div class="t " style="left:566.80px;top:142.08px;font-size:9.8px;transform-origin:0 50%;transform:scaleX(0.965);">100</div>
<div class="t " style="left:616.80px;top:142.08px;font-size:9.8px;transform-origin:0 50%;transform:scaleX(0.885);">OK</div>
<div class="t b" style="left:728.80px;top:141.88px;font-size:9.8px;transform-origin:0 50%;transform:scaleX(0.935);">000000000000</div>
<div class="a" style="left:840px;top:140.58px;width:14px;height:13.5px;background:#fff;border:1px solid #dadada"><div class="a" style="left:1.5px;top:4.6px;width:10px;height:3px;background:#1b8044"></div></div>
<div class="a" style="left:854.5px;top:140.58px;width:18px;height:13.5px;background:#fff;border:1px solid #dadada;"></div>
<div class="t b" style="left:860.77px;top:142.38px;font-size:9.8px;">0</div>
<div class="a" style="left:873px;top:140.58px;width:14px;height:13.5px;background:#fff;border:1px solid #dadada"><div class="a" style="left:1.5px;top:4.6px;width:10px;height:3px;background:#1b8044"></div><div class="a" style="left:5px;top:1.1px;width:3px;height:10px;background:#1b8044"></div></div>
<svg class="a" style="left:910.6px;top:141.98px" width="11.3" height="10.6" viewBox="0 0 11.3 10.6"><rect x=".55" y=".55" width="10.2" height="9.5" fill="#fff" stroke="#4a4a4a" stroke-width="1.1"/><path d="M2.6 5.3L4.7 7.4L8.8 2.8" fill="none" stroke="#2a8a3a" stroke-width="1.5"/></svg>
<div class="t " style="left:259.00px;top:157.51px;font-size:9.8px;">12</div>
<div class="t " style="left:278.30px;top:157.51px;font-size:9.8px;transform-origin:0 50%;transform:scaleX(0.982);">Drive Power Cycle Count</div>
<div class="t " style="left:454.70px;top:157.51px;font-size:9.8px;transform-origin:0 50%;transform:scaleX(0.965);">20</div>
<div class="t " style="left:510.30px;top:157.51px;font-size:9.8px;transform-origin:0 50%;transform:scaleX(0.965);">99</div>
<div class="t " style="left:566.80px;top:157.51px;font-size:9.8px;transform-origin:0 50%;transform:scaleX(0.965);">99</div>
<div class="t " style="left:616.80px;top:157.51px;font-size:9.8px;transform-origin:0 50%;transform:scaleX(0.885);">OK</div>
<div class="t b" style="left:728.80px;top:157.31px;font-size:9.8px;transform-origin:0 50%;transform:scaleX(0.935);">00000000074C</div>
<div class="a" style="left:840px;top:156.01px;width:14px;height:13.5px;background:#fff;border:1px solid #dadada"><div class="a" style="left:1.5px;top:4.6px;width:10px;height:3px;background:#1b8044"></div></div>
<div class="a" style="left:854.5px;top:156.01px;width:18px;height:13.5px;background:#fff;border:1px solid #dadada;"></div>
<div class="t b" style="left:860.77px;top:157.81px;font-size:9.8px;">0</div>
<div class="a" style="left:873px;top:156.01px;width:14px;height:13.5px;background:#fff;border:1px solid #dadada"><div class="a" style="left:1.5px;top:4.6px;width:10px;height:3px;background:#1b8044"></div><div class="a" style="left:5px;top:1.1px;width:3px;height:10px;background:#1b8044"></div></div>
<svg class="a" style="left:910.6px;top:157.41px" width="11.3" height="10.6" viewBox="0 0 11.3 10.6"><rect x=".55" y=".55" width="10.2" height="9.5" fill="#fff" stroke="#4a4a4a" stroke-width="1.1"/><path d="M2.6 5.3L4.7 7.4L8.8 2.8" fill="none" stroke="#2a8a3a" stroke-width="1.5"/></svg>
<div class="t " style="left:259.00px;top:172.94px;font-size:9.8px;">183</div>
<div class="t " style="left:278.30px;top:172.94px;font-size:9.8px;transform-origin:0 50%;transform:scaleX(1.010);">SATA Downshift Count</div>
<div class="t " style="left:454.70px;top:172.94px;font-size:9.8px;transform-origin:0 50%;transform:scaleX(0.965);">0</div>
<div class="t " style="left:510.30px;top:172.94px;font-size:9.8px;transform-origin:0 50%;transform:scaleX(0.965);">100</div>
<div class="t " style="left:566.80px;top:172.94px;font-size:9.8px;transform-origin:0 50%;transform:scaleX(0.965);">100</div>
<div class="t " style="left:616.80px;top:172.94px;font-size:9.8px;transform-origin:0 50%;transform:scaleX(0.952);">OK (Always passing)</div>
<div class="t b" style="left:728.80px;top:172.74px;font-size:9.8px;transform-origin:0 50%;transform:scaleX(0.935);">000000000000</div>
<div class="a" style="left:840px;top:171.44px;width:14px;height:13.5px;background:#fff;border:1px solid #dadada"><div class="a" style="left:1.5px;top:4.6px;width:10px;height:3px;background:#1b8044"></div></div>
<div class="a" style="left:854.5px;top:171.44px;width:18px;height:13.5px;background:#fff;border:1px solid #dadada;"></div>
<div class="t b" style="left:860.77px;top:173.24px;font-size:9.8px;">0</div>
<div class="a" style="left:873px;top:171.44px;width:14px;height:13.5px;background:#fff;border:1px solid #dadada"><div class="a" style="left:1.5px;top:4.6px;width:10px;height:3px;background:#1b8044"></div><div class="a" style="left:5px;top:1.1px;width:3px;height:10px;background:#1b8044"></div></div>
<svg class="a" style="left:910.6px;top:172.84px" width="11.3" height="10.6" viewBox="0 0 11.3 10.6"><rect x=".55" y=".55" width="10.2" height="9.5" fill="#fff" stroke="#4a4a4a" stroke-width="1.1"/><path d="M2.6 5.3L4.7 7.4L8.8 2.8" fill="none" stroke="#2a8a3a" stroke-width="1.5"/></svg>
<div class="t " style="left:259.00px;top:188.37px;font-size:9.8px;">184</div>
<div class="t " style="left:278.30px;top:188.37px;font-size:9.8px;">End-to-End Error Count</div>
<div class="t " style="left:454.70px;top:188.37px;font-size:9.8px;transform-origin:0 50%;transform:scaleX(0.965);">99</div>
<div class="t " style="left:510.30px;top:188.37px;font-size:9.8px;transform-origin:0 50%;transform:scaleX(0.965);">100</div>
<div class="t " style="left:566.80px;top:188.37px;font-size:9.8px;transform-origin:0 50%;transform:scaleX(0.965);">100</div>
<div class="t " style="left:616.80px;top:188.37px;font-size:9.8px;transform-origin:0 50%;transform:scaleX(0.885);">OK</div>
<div class="t b" style="left:728.80px;top:188.17px;font-size:9.8px;transform-origin:0 50%;transform:scaleX(0.935);">000000000000</div>
<div class="a" style="left:840px;top:186.87px;width:14px;height:13.5px;background:#fff;border:1px solid #dadada"><div class="a" style="left:1.5px;top:4.6px;width:10px;height:3px;background:#1b8044"></div></div>
<div class="a" style="left:854.5px;top:186.87px;width:18px;height:13.5px;background:#fff;border:1px solid #dadada;"></div>
<div class="t b" style="left:860.77px;top:188.67px;font-size:9.8px;">0</div>
<div class="a" style="left:873px;top:186.87px;width:14px;height:13.5px;background:#fff;border:1px solid #dadada"><div class="a" style="left:1.5px;top:4.6px;width:10px;height:3px;background:#1b8044"></div><div class="a" style="left:5px;top:1.1px;width:3px;height:10px;background:#1b8044"></div></div>
<svg class="a" style="left:910.6px;top:188.27px" width="11.3" height="10.6" viewBox="0 0 11.3 10.6"><rect x=".55" y=".55" width="10.2" height="9.5" fill="#fff" stroke="#4a4a4a" stroke-width="1.1"/><path d="M2.6 5.3L4.7 7.4L8.8 2.8" fill="none" stroke="#2a8a3a" stroke-width="1.5"/></svg>
<div class="t " style="left:259.00px;top:203.80px;font-size:9.8px;">187</div>
<div class="t " style="left:278.30px;top:203.80px;font-size:9.8px;transform-origin:0 50%;transform:scaleX(0.994);">Reported Uncorrectable Errors</div>
<div class="t " style="left:454.70px;top:203.80px;font-size:9.8px;transform-origin:0 50%;transform:scaleX(0.965);">0</div>
<div class="t " style="left:510.30px;top:203.80px;font-size:9.8px;transform-origin:0 50%;transform:scaleX(0.965);">98</div>
<div class="t " style="left:566.80px;top:203.80px;font-size:9.8px;transform-origin:0 50%;transform:scaleX(0.965);">98</div>
<div class="t " style="left:616.80px;top:203.80px;font-size:9.8px;transform-origin:0 50%;transform:scaleX(0.952);">OK (Always passing)</div>
<div class="t b" style="left:728.80px;top:203.60px;font-size:9.8px;transform-origin:0 50%;transform:scaleX(0.935);">000000000002</div>
<div class="a" style="left:840px;top:202.3px;width:14px;height:13.5px;background:#fff;border:1px solid #dadada"><div class="a" style="left:1.5px;top:4.6px;width:10px;height:3px;background:#1b8044"></div></div>
<div class="a" style="left:854.5px;top:202.3px;width:18px;height:13.5px;background:#fff;border:1px solid #dadada;"></div>
<div class="t b" style="left:860.77px;top:204.10px;font-size:9.8px;">0</div>
<div class="a" style="left:873px;top:202.3px;width:14px;height:13.5px;background:#fff;border:1px solid #dadada"><div class="a" style="left:1.5px;top:4.6px;width:10px;height:3px;background:#1b8044"></div><div class="a" style="left:5px;top:1.1px;width:3px;height:10px;background:#1b8044"></div></div>
<svg class="a" style="left:910.6px;top:203.7px" width="11.3" height="10.6" viewBox="0 0 11.3 10.6"><rect x=".55" y=".55" width="10.2" height="9.5" fill="#fff" stroke="#4a4a4a" stroke-width="1.1"/><path d="M2.6 5.3L4.7 7.4L8.8 2.8" fill="none" stroke="#2a8a3a" stroke-width="1.5"/></svg>
<div class="t " style="left:259.00px;top:219.23px;font-size:9.8px;">188</div>
<div class="t " style="left:278.30px;top:219.23px;font-size:9.8px;transform-origin:0 50%;transform:scaleX(1.016);">Command Timeout</div>
<div class="t " style="left:454.70px;top:219.23px;font-size:9.8px;transform-origin:0 50%;transform:scaleX(0.965);">0</div>
<div class="t " style="left:510.30px;top:219.23px;font-size:9.8px;transform-origin:0 50%;transform:scaleX(0.965);">100</div>
<div class="t " style="left:566.80px;top:219.23px;font-size:9.8px;transform-origin:0 50%;transform:scaleX(0.965);">97</div>
<div class="t " style="left:616.80px;top:219.23px;font-size:9.8px;transform-origin:0 50%;transform:scaleX(0.952);">OK (Always passing)</div>
<div class="t b" style="left:728.80px;top:219.03px;font-size:9.8px;transform-origin:0 50%;transform:scaleX(0.935);">00040004019C</div>
<div class="a" style="left:840px;top:217.73px;width:14px;height:13.5px;background:#fff;border:1px solid #dadada"><div class="a" style="left:1.5px;top:4.6px;width:10px;height:3px;background:#1b8044"></div></div>
<div class="a" style="left:854.5px;top:217.73px;width:18px;height:13.5px;background:#fff;border:1px solid #dadada;"></div>
<div class="t b" style="left:860.77px;top:219.53px;font-size:9.8px;">0</div>
<div class="a" style="left:873px;top:217.73px;width:14px;height:13.5px;background:#fff;border:1px solid #dadada"><div class="a" style="left:1.5px;top:4.6px;width:10px;height:3px;background:#1b8044"></div><div class="a" style="left:5px;top:1.1px;width:3px;height:10px;background:#1b8044"></div></div>
<svg class="a" style="left:910.6px;top:219.13px" width="11.3" height="10.6" viewBox="0 0 11.3 10.6"><rect x=".55" y=".55" width="10.2" height="9.5" fill="#fff" stroke="#4a4a4a" stroke-width="1.1"/><path d="M2.6 5.3L4.7 7.4L8.8 2.8" fill="none" stroke="#2a8a3a" stroke-width="1.5"/></svg>
<div class="t " style="left:259.00px;top:234.66px;font-size:9.8px;">189</div>
<div class="t " style="left:278.30px;top:234.66px;font-size:9.8px;transform-origin:0 50%;transform:scaleX(0.994);">High Fly Writes</div>
<div class="t " style="left:454.70px;top:234.66px;font-size:9.8px;transform-origin:0 50%;transform:scaleX(0.965);">0</div>
<div class="t " style="left:510.30px;top:234.66px;font-size:9.8px;transform-origin:0 50%;transform:scaleX(0.965);">1</div>
<div class="t " style="left:566.80px;top:234.66px;font-size:9.8px;transform-origin:0 50%;transform:scaleX(0.965);">1</div>
<div class="t " style="left:616.80px;top:234.66px;font-size:9.8px;transform-origin:0 50%;transform:scaleX(0.952);">OK (Always passing)</div>
<div class="t b" style="left:728.80px;top:234.46px;font-size:9.8px;transform-origin:0 50%;transform:scaleX(0.935);">000000000071</div>
<div class="a" style="left:840px;top:233.16px;width:14px;height:13.5px;background:#fff;border:1px solid #dadada"><div class="a" style="left:1.5px;top:4.6px;width:10px;height:3px;background:#1b8044"></div></div>
<div class="a" style="left:854.5px;top:233.16px;width:18px;height:13.5px;background:#fff;border:1px solid #dadada;"></div>
<div class="t b" style="left:860.77px;top:234.96px;font-size:9.8px;">0</div>
<div class="a" style="left:873px;top:233.16px;width:14px;height:13.5px;background:#fff;border:1px solid #dadada"><div class="a" style="left:1.5px;top:4.6px;width:10px;height:3px;background:#1b8044"></div><div class="a" style="left:5px;top:1.1px;width:3px;height:10px;background:#1b8044"></div></div>
<svg class="a" style="left:910.6px;top:234.56px" width="11.3" height="10.6" viewBox="0 0 11.3 10.6"><rect x=".55" y=".55" width="10.2" height="9.5" fill="#fff" stroke="#4a4a4a" stroke-width="1.1"/><path d="M2.6 5.3L4.7 7.4L8.8 2.8" fill="none" stroke="#2a8a3a" stroke-width="1.5"/></svg>
<div class="t " style="left:259.00px;top:250.09px;font-size:9.8px;">190</div>
<div class="t " style="left:278.30px;top:250.09px;font-size:9.8px;transform-origin:0 50%;transform:scaleX(1.026);">Airflow Temperature</div>
<div class="t " style="left:454.70px;top:250.09px;font-size:9.8px;transform-origin:0 50%;transform:scaleX(0.965);">45</div>
<div class="t " style="left:510.30px;top:250.09px;font-size:9.8px;transform-origin:0 50%;transform:scaleX(0.965);">55</div>
<div class="t " style="left:566.80px;top:250.09px;font-size:9.8px;transform-origin:0 50%;transform:scaleX(0.965);">48</div>
<div class="t " style="left:616.80px;top:250.09px;font-size:9.8px;transform-origin:0 50%;transform:scaleX(0.885);">OK</div>
<div class="t b" style="left:728.80px;top:249.89px;font-size:9.8px;transform-origin:0 50%;transform:scaleX(0.935);">00002E2C002D</div>
<div class="a" style="left:840px;top:248.59px;width:14px;height:13.5px;background:#fff;border:1px solid #dadada"><div class="a" style="left:1.5px;top:4.6px;width:10px;height:3px;background:#1b8044"></div></div>
<div class="a" style="left:854.5px;top:248.59px;width:18px;height:13.5px;background:#fff;border:1px solid #dadada;"></div>
<div class="t b" style="left:860.77px;top:250.39px;font-size:9.8px;">0</div>
<div class="a" style="left:873px;top:248.59px;width:14px;height:13.5px;background:#fff;border:1px solid #dadada"><div class="a" style="left:1.5px;top:4.6px;width:10px;height:3px;background:#1b8044"></div><div class="a" style="left:5px;top:1.1px;width:3px;height:10px;background:#1b8044"></div></div>
<svg class="a" style="left:910.6px;top:249.99px" width="11.3" height="10.6" viewBox="0 0 11.3 10.6"><rect x=".55" y=".55" width="10.2" height="9.5" fill="#fff" stroke="#4a4a4a" stroke-width="1.1"/><path d="M2.6 5.3L4.7 7.4L8.8 2.8" fill="none" stroke="#2a8a3a" stroke-width="1.5"/></svg>
<div class="t " style="left:259.00px;top:265.52px;font-size:9.8px;">194</div>
<div class="t " style="left:278.30px;top:265.52px;font-size:9.8px;transform-origin:0 50%;transform:scaleX(1.005);">Disk Temperature</div>
<div class="t " style="left:454.70px;top:265.52px;font-size:9.8px;transform-origin:0 50%;transform:scaleX(0.965);">0</div>
<div class="t " style="left:510.30px;top:265.52px;font-size:9.8px;transform-origin:0 50%;transform:scaleX(0.965);">45</div>
<div class="t " style="left:566.80px;top:265.52px;font-size:9.8px;transform-origin:0 50%;transform:scaleX(0.965);">52</div>
<div class="t " style="left:616.80px;top:265.52px;font-size:9.8px;transform-origin:0 50%;transform:scaleX(0.952);">OK (Always passing)</div>
<div class="t b" style="left:728.80px;top:265.32px;font-size:9.8px;transform-origin:0 50%;transform:scaleX(0.935);">000B0000002D</div>
<div class="a" style="left:840px;top:264.02px;width:14px;height:13.5px;background:#fff;border:1px solid #dadada"><div class="a" style="left:1.5px;top:4.6px;width:10px;height:3px;background:#1b8044"></div></div>
<div class="a" style="left:854.5px;top:264.02px;width:18px;height:13.5px;background:#fff;border:1px solid #dadada;"></div>
<div class="t b" style="left:860.77px;top:265.82px;font-size:9.8px;">0</div>
<div class="a" style="left:873px;top:264.02px;width:14px;height:13.5px;background:#fff;border:1px solid #dadada"><div class="a" style="left:1.5px;top:4.6px;width:10px;height:3px;background:#1b8044"></div><div class="a" style="left:5px;top:1.1px;width:3px;height:10px;background:#1b8044"></div></div>
<svg class="a" style="left:910.6px;top:265.42px" width="11.3" height="10.6" viewBox="0 0 11.3 10.6"><rect x=".55" y=".55" width="10.2" height="9.5" fill="#fff" stroke="#4a4a4a" stroke-width="1.1"/><path d="M2.6 5.3L4.7 7.4L8.8 2.8" fill="none" stroke="#2a8a3a" stroke-width="1.5"/></svg>
<div class="t " style="left:259.00px;top:280.95px;font-size:9.8px;">195</div>
<div class="t " style="left:278.30px;top:280.95px;font-size:9.8px;transform-origin:0 50%;transform:scaleX(0.954);">Hardware ECC Recovered</div>
<div class="t " style="left:454.70px;top:280.95px;font-size:9.8px;transform-origin:0 50%;transform:scaleX(0.965);">0</div>
<div class="t " style="left:510.30px;top:280.95px;font-size:9.8px;transform-origin:0 50%;transform:scaleX(0.965);">51</div>
<div class="t " style="left:566.80px;top:280.95px;font-size:9.8px;transform-origin:0 50%;transform:scaleX(0.965);">34</div>
<div class="t " style="left:616.80px;top:280.95px;font-size:9.8px;transform-origin:0 50%;transform:scaleX(0.952);">OK (Always passing)</div>
<div class="t b" style="left:728.80px;top:280.75px;font-size:9.8px;transform-origin:0 50%;transform:scaleX(0.935);">00000BB96918</div>
<div class="a" style="left:840px;top:279.45px;width:14px;height:13.5px;background:#fff;border:1px solid #dadada"><div class="a" style="left:1.5px;top:4.6px;width:10px;height:3px;background:#1b8044"></div></div>
<div class="a" style="left:854.5px;top:279.45px;width:18px;height:13.5px;background:#fff;border:1px solid #dadada;"></div>
<div class="t b" style="left:860.77px;top:281.25px;font-size:9.8px;">0</div>
<div class="a" style="left:873px;top:279.45px;width:14px;height:13.5px;background:#fff;border:1px solid #dadada"><div class="a" style="left:1.5px;top:4.6px;width:10px;height:3px;background:#1b8044"></div><div class="a" style="left:5px;top:1.1px;width:3px;height:10px;background:#1b8044"></div></div>
<svg class="a" style="left:910.6px;top:280.85px" width="11.3" height="10.6" viewBox="0 0 11.3 10.6"><rect x=".55" y=".55" width="10.2" height="9.5" fill="#fff" stroke="#4a4a4a" stroke-width="1.1"/><path d="M2.6 5.3L4.7 7.4L8.8 2.8" fill="none" stroke="#2a8a3a" stroke-width="1.5"/></svg>
<div class="a" style="left:243px;top:293.88px;width:696px;height:15.43px;background:#f5f5f5"></div>
<svg class="a" style="left:243px;top:294.58px" width="14" height="14" viewBox="0 0 14 14"><path d="M7 1L13.300 12.700H.7z" fill="#f8e81c" stroke="#b09800" stroke-width=".9" stroke-linejoin="round"/><path d="M7 4.500v4.300" stroke="#222" stroke-width="1.700" stroke-linecap="round"/><circle cx="7" cy="10.800" r="1" fill="#222"/></svg>
<div class="t " style="left:259.00px;top:296.38px;font-size:9.8px;">197</div>
<div class="t " style="left:278.30px;top:296.38px;font-size:9.8px;">Current Pending Sector Count</div>
<div class="t " style="left:454.70px;top:296.38px;font-size:9.8px;transform-origin:0 50%;transform:scaleX(0.965);">0</div>
<div class="t " style="left:510.30px;top:296.38px;font-size:9.8px;transform-origin:0 50%;transform:scaleX(0.965);">98</div>
<div class="t " style="left:566.80px;top:296.38px;font-size:9.8px;transform-origin:0 50%;transform:scaleX(0.965);">98</div>
<div class="t " style="left:616.80px;top:296.38px;font-size:9.8px;transform-origin:0 50%;transform:scaleX(0.952);">OK (Always passing)</div>
<div class="t b" style="left:728.80px;top:296.18px;font-size:9.8px;transform-origin:0 50%;transform:scaleX(0.935);">00000000005B</div>
<div class="a" style="left:840px;top:294.88px;width:14px;height:13.5px;background:#fff;border:1px solid #dadada"><div class="a" style="left:1.5px;top:4.6px;width:10px;height:3px;background:#1b8044"></div></div>
<div class="a" style="left:854.5px;top:294.88px;width:18px;height:13.5px;background:#fff;border:1px solid #dadada;"></div>
<div class="t b" style="left:860.77px;top:296.68px;font-size:9.8px;">0</div>
<div class="a" style="left:873px;top:294.88px;width:14px;height:13.5px;background:#fff;border:1px solid #dadada"><div class="a" style="left:1.5px;top:4.6px;width:10px;height:3px;background:#1b8044"></div><div class="a" style="left:5px;top:1.1px;width:3px;height:10px;background:#1b8044"></div></div>
<svg class="a" style="left:910.6px;top:296.28px" width="11.3" height="10.6" viewBox="0 0 11.3 10.6"><rect x=".55" y=".55" width="10.2" height="9.5" fill="#fff" stroke="#4a4a4a" stroke-width="1.1"/><path d="M2.6 5.3L4.7 7.4L8.8 2.8" fill="none" stroke="#2a8a3a" stroke-width="1.5"/></svg>
<div class="a" style="left:243px;top:309.31px;width:696px;height:15.43px;background:#f5f5f5"></div>
<svg class="a" style="left:243px;top:310.01px" width="14" height="14" viewBox="0 0 14 14"><path d="M7 1L13.300 12.700H.7z" fill="#f8e81c" stroke="#b09800" stroke-width=".9" stroke-linejoin="round"/><path d="M7 4.500v4.300" stroke="#222" stroke-width="1.700" stroke-linecap="round"/><circle cx="7" cy="10.800" r="1" fill="#222"/></svg>
<div class="t " style="left:259.00px;top:311.81px;font-size:9.8px;">198</div>
<div class="t " style="left:278.30px;top:311.81px;font-size:9.8px;transform-origin:0 50%;transform:scaleX(1.005);">Off-Line Uncorrectable Sector Count</div>
<div class="t " style="left:454.70px;top:311.81px;font-size:9.8px;transform-origin:0 50%;transform:scaleX(0.965);">0</div>
<div class="t " style="left:510.30px;top:311.81px;font-size:9.8px;transform-origin:0 50%;transform:scaleX(0.965);">98</div>
<div class="t " style="left:566.80px;top:311.81px;font-size:9.8px;transform-origin:0 50%;transform:scaleX(0.965);">98</div>
<div class="t " style="left:616.80px;top:311.81px;font-size:9.8px;transform-origin:0 50%;transform:scaleX(0.952);">OK (Always passing)</div>
<div class="t b" style="left:728.80px;top:311.61px;font-size:9.8px;transform-origin:0 50%;transform:scaleX(0.935);">00000000005B</div>
<div class="a" style="left:840px;top:310.31px;width:14px;height:13.5px;background:#fff;border:1px solid #dadada"><div class="a" style="left:1.5px;top:4.6px;width:10px;height:3px;background:#1b8044"></div></div>
<div class="a" style="left:854.5px;top:310.31px;width:18px;height:13.5px;background:#fff;border:1px solid #dadada;"></div>
<div class="t b" style="left:860.77px;top:312.11px;font-size:9.8px;">0</div>
<div class="a" style="left:873px;top:310.31px;width:14px;height:13.5px;background:#fff;border:1px solid #dadada"><div class="a" style="left:1.5px;top:4.6px;width:10px;height:3px;background:#1b8044"></div><div class="a" style="left:5px;top:1.1px;width:3px;height:10px;background:#1b8044"></div></div>
<svg class="a" style="left:910.6px;top:311.71px" width="11.3" height="10.6" viewBox="0 0 11.3 10.6"><rect x=".55" y=".55" width="10.2" height="9.5" fill="#fff" stroke="#4a4a4a" stroke-width="1.1"/><path d="M2.6 5.3L4.7 7.4L8.8 2.8" fill="none" stroke="#2a8a3a" stroke-width="1.5"/></svg>
<div class="t " style="left:259.00px;top:327.24px;font-size:9.8px;">199</div>
<div class="t " style="left:278.30px;top:327.24px;font-size:9.8px;transform-origin:0 50%;transform:scaleX(0.986);">Ultra ATA CRC Error Count</div>
<div class="t " style="left:454.70px;top:327.24px;font-size:9.8px;transform-origin:0 50%;transform:scaleX(0.965);">0</div>
<div class="t " style="left:510.30px;top:327.24px;font-size:9.8px;transform-origin:0 50%;transform:scaleX(0.965);">200</div>
<div class="t " style="left:566.80px;top:327.24px;font-size:9.8px;transform-origin:0 50%;transform:scaleX(0.965);">200</div>
<div class="t " style="left:616.80px;top:327.24px;font-size:9.8px;transform-origin:0 50%;transform:scaleX(0.952);">OK (Always passing)</div>
<div class="t b" style="left:728.80px;top:327.04px;font-size:9.8px;transform-origin:0 50%;transform:scaleX(0.935);">000000000000</div>
<div class="a" style="left:840px;top:325.74px;width:14px;height:13.5px;background:#fff;border:1px solid #dadada"><div class="a" style="left:1.5px;top:4.6px;width:10px;height:3px;background:#1b8044"></div></div>
<div class="a" style="left:854.5px;top:325.74px;width:18px;height:13.5px;background:#fff;border:1px solid #dadada;"></div>
<div class="t b" style="left:860.77px;top:327.54px;font-size:9.8px;">0</div>
<div class="a" style="left:873px;top:325.74px;width:14px;height:13.5px;background:#fff;border:1px solid #dadada"><div class="a" style="left:1.5px;top:4.6px;width:10px;height:3px;background:#1b8044"></div><div class="a" style="left:5px;top:1.1px;width:3px;height:10px;background:#1b8044"></div></div>
<svg class="a" style="left:910.6px;top:327.14px" width="11.3" height="10.6" viewBox="0 0 11.3 10.6"><rect x=".55" y=".55" width="10.2" height="9.5" fill="#fff" stroke="#4a4a4a" stroke-width="1.1"/><path d="M2.6 5.3L4.7 7.4L8.8 2.8" fill="none" stroke="#2a8a3a" stroke-width="1.5"/></svg>
<div class="t " style="left:259.00px;top:342.67px;font-size:9.8px;">240</div>
<div class="t " style="left:278.30px;top:342.67px;font-size:9.8px;transform-origin:0 50%;transform:scaleX(0.989);">Head Flying Hours</div>
<div class="t " style="left:454.70px;top:342.67px;font-size:9.8px;transform-origin:0 50%;transform:scaleX(0.965);">0</div>
<div class="t " style="left:510.30px;top:342.67px;font-size:9.8px;transform-origin:0 50%;transform:scaleX(0.965);">100</div>
<div class="t " style="left:566.80px;top:342.67px;font-size:9.8px;transform-origin:0 50%;transform:scaleX(0.965);">253</div>
<div class="t " style="left:616.80px;top:342.67px;font-size:9.8px;transform-origin:0 50%;transform:scaleX(0.952);">OK (Always passing)</div>
<div class="t b" style="left:728.80px;top:342.47px;font-size:9.8px;transform-origin:0 50%;transform:scaleX(0.935);">99CA00007776</div>
<div class="a" style="left:840px;top:341.17px;width:14px;height:13.5px;background:#fff;border:1px solid #dadada"><div class="a" style="left:1.5px;top:4.6px;width:10px;height:3px;background:#1b8044"></div></div>
<div class="a" style="left:854.5px;top:341.17px;width:18px;height:13.5px;background:#fff;border:1px solid #dadada;"></div>
<div class="t b" style="left:860.77px;top:342.97px;font-size:9.8px;">0</div>
<div class="a" style="left:873px;top:341.17px;width:14px;height:13.5px;background:#fff;border:1px solid #dadada"><div class="a" style="left:1.5px;top:4.6px;width:10px;height:3px;background:#1b8044"></div><div class="a" style="left:5px;top:1.1px;width:3px;height:10px;background:#1b8044"></div></div>
<svg class="a" style="left:910.6px;top:342.57px" width="11.3" height="10.6" viewBox="0 0 11.3 10.6"><rect x=".55" y=".55" width="10.2" height="9.5" fill="#fff" stroke="#4a4a4a" stroke-width="1.1"/><path d="M2.6 5.3L4.7 7.4L8.8 2.8" fill="none" stroke="#2a8a3a" stroke-width="1.5"/></svg>
<div class="t " style="left:259.00px;top:358.10px;font-size:9.8px;">241</div>
<div class="t " style="left:278.30px;top:358.10px;font-size:9.8px;transform-origin:0 50%;transform:scaleX(1.017);">Total LBA Written</div>
<div class="t " style="left:454.70px;top:358.10px;font-size:9.8px;transform-origin:0 50%;transform:scaleX(0.965);">0</div>
<div class="t " style="left:510.30px;top:358.10px;font-size:9.8px;transform-origin:0 50%;transform:scaleX(0.965);">100</div>
<div class="t " style="left:566.80px;top:358.10px;font-size:9.8px;transform-origin:0 50%;transform:scaleX(0.965);">253</div>
<div class="t " style="left:616.80px;top:358.10px;font-size:9.8px;transform-origin:0 50%;transform:scaleX(0.952);">OK (Always passing)</div>
<div class="t b" style="left:728.80px;top:357.90px;font-size:9.8px;transform-origin:0 50%;transform:scaleX(0.935);">000001B17AA8</div>
<div class="a" style="left:840px;top:356.6px;width:14px;height:13.5px;background:#fff;border:1px solid #dadada"><div class="a" style="left:1.5px;top:4.6px;width:10px;height:3px;background:#1b8044"></div></div>
<div class="a" style="left:854.5px;top:356.6px;width:18px;height:13.5px;background:#fff;border:1px solid #dadada;"></div>
<div class="t b" style="left:860.77px;top:358.40px;font-size:9.8px;">0</div>
<div class="a" style="left:873px;top:356.6px;width:14px;height:13.5px;background:#fff;border:1px solid #dadada"><div class="a" style="left:1.5px;top:4.6px;width:10px;height:3px;background:#1b8044"></div><div class="a" style="left:5px;top:1.1px;width:3px;height:10px;background:#1b8044"></div></div>
<svg class="a" style="left:910.6px;top:358.0px" width="11.3" height="10.6" viewBox="0 0 11.3 10.6"><rect x=".55" y=".55" width="10.2" height="9.5" fill="#fff" stroke="#4a4a4a" stroke-width="1.1"/><path d="M2.6 5.3L4.7 7.4L8.8 2.8" fill="none" stroke="#2a8a3a" stroke-width="1.5"/></svg>
<div class="t " style="left:259.00px;top:373.53px;font-size:9.8px;">242</div>
<div class="t " style="left:278.30px;top:373.53px;font-size:9.8px;transform-origin:0 50%;transform:scaleX(0.972);">Total LBA Read</div>
<div class="t " style="left:454.70px;top:373.53px;font-size:9.8px;transform-origin:0 50%;transform:scaleX(0.965);">0</div>
<div class="t " style="left:510.30px;top:373.53px;font-size:9.8px;transform-origin:0 50%;transform:scaleX(0.965);">100</div>
<div class="t " style="left:566.80px;top:373.53px;font-size:9.8px;transform-origin:0 50%;transform:scaleX(0.965);">253</div>
<div class="t " style="left:616.80px;top:373.53px;font-size:9.8px;transform-origin:0 50%;transform:scaleX(0.952);">OK (Always passing)</div>
<div class="t b" style="left:728.80px;top:373.33px;font-size:9.8px;transform-origin:0 50%;transform:scaleX(0.935);">0000809FD99D</div>
<div class="a" style="left:840px;top:372.03px;width:14px;height:13.5px;background:#fff;border:1px solid #dadada"><div class="a" style="left:1.5px;top:4.6px;width:10px;height:3px;background:#1b8044"></div></div>
<div class="a" style="left:854.5px;top:372.03px;width:18px;height:13.5px;background:#fff;border:1px solid #dadada;"></div>
<div class="t b" style="left:860.77px;top:373.83px;font-size:9.8px;">0</div>
<div class="a" style="left:873px;top:372.03px;width:14px;height:13.5px;background:#fff;border:1px solid #dadada"><div class="a" style="left:1.5px;top:4.6px;width:10px;height:3px;background:#1b8044"></div><div class="a" style="left:5px;top:1.1px;width:3px;height:10px;background:#1b8044"></div></div>
<svg class="a" style="left:910.6px;top:373.43px" width="11.3" height="10.6" viewBox="0 0 11.3 10.6"><rect x=".55" y=".55" width="10.2" height="9.5" fill="#fff" stroke="#4a4a4a" stroke-width="1.1"/><path d="M2.6 5.3L4.7 7.4L8.8 2.8" fill="none" stroke="#2a8a3a" stroke-width="1.5"/></svg>
<div class="a" style="left:241px;top:423.5px;width:800px;height:3px;background:#ececec"></div>
<div class="a" style="left:241px;top:445px;width:800px;height:311px;background:#fff;border:1px solid #dcdcdc"></div>
<div class="a" style="left:241px;top:426px;width:131.5px;height:20px;background:#fff;border:1px solid #dcdcdc;border-bottom:none"></div>
<div class="t " style="left:248.00px;top:430.90px;font-size:10.2px;transform-origin:0 50%;transform:scaleX(0.974);">Reallocated Sectors Count</div>
<div class="a" style="left:245px;top:448px;width:636.5px;height:304px;background:linear-gradient(#ffffff,#fbfbfb 7%,#e2e2e2 50%,#cfcfcf 78%,#bdbdbd)"></div>
<div class="a" style="left:881px;top:448px;width:1.2px;height:305px;background:#b0b0b0"></div>
<svg class="a" style="left:0;top:0" width="1024" height="772" viewBox="0 0 1024 772" font-family="Liberation Sans,sans-serif" font-size="9.7" text-rendering="geometricPrecision" stroke="#1a1a1a" stroke-width="0"><path d="M287.4 675.2H818.5" stroke="#9c9c9c" stroke-width="1" stroke-dasharray="2.6 2.6" fill="none"/><path d="M287.4 646.45H818.5" stroke="#9c9c9c" stroke-width="1" stroke-dasharray="2.6 2.6" fill="none"/><path d="M287.4 617.7H818.5" stroke="#9c9c9c" stroke-width="1" stroke-dasharray="2.6 2.6" fill="none"/><path d="M287.4 588.95H818.5" stroke="#9c9c9c" stroke-width="1" stroke-dasharray="2.6 2.6" fill="none"/><path d="M287.4 560.2H818.5" stroke="#9c9c9c" stroke-width="1" stroke-dasharray="2.6 2.6" fill="none"/><path d="M287.4 531.45H818.5" stroke="#9c9c9c" stroke-width="1" stroke-dasharray="2.6 2.6" fill="none"/><path d="M287.4 502.7H818.5" stroke="#9c9c9c" stroke-width="1" stroke-dasharray="2.6 2.6" fill="none"/><path d="M289.4 479.6V703.5" stroke="#9c9c9c" stroke-width="1" stroke-dasharray="2.6 2.6" fill="none"/><path d="M302.24 479.6V703.5" stroke="#9c9c9c" stroke-width="1" stroke-dasharray="2.6 2.6" fill="none"/><path d="M345.04 479.6V703.5" stroke="#9c9c9c" stroke-width="1" stroke-dasharray="2.6 2.6" fill="none"/><path d="M413.52 479.6V703.5" stroke="#9c9c9c" stroke-width="1" stroke-dasharray="2.6 2.6" fill="none"/><path d="M674.6 479.6V703.5" stroke="#9c9c9c" stroke-width="1" stroke-dasharray="2.6 2.6" fill="none"/><path d="M815.84 479.6V703.5" stroke="#9c9c9c" stroke-width="1" stroke-dasharray="2.6 2.6" fill="none"/><path d="M287.4 479.6H818.5" stroke="#505050" stroke-width="1.6" fill="none"/><path d="M287.4 479.6V698.5" stroke="#505050" stroke-width="1.6" fill="none"/><path d="M287.4 698.5H818.5V479.6" stroke="#303030" stroke-width="1" fill="none"/><path d="M283.9 675.2H287.4" stroke="#707070" stroke-width="1"/><text x="282.59999999999997" y="678.7" text-anchor="end" textLength="4.8" lengthAdjust="spacingAndGlyphs" fill="#1a1a1a" stroke-width=".25">0</text><path d="M283.9 646.45H287.4" stroke="#707070" stroke-width="1"/><text x="282.59999999999997" y="649.95" text-anchor="end" textLength="4.8" lengthAdjust="spacingAndGlyphs" fill="#1a1a1a" stroke-width=".25">5</text><path d="M283.9 617.7H287.4" stroke="#707070" stroke-width="1"/><text x="282.59999999999997" y="621.2" text-anchor="end" textLength="9.5" lengthAdjust="spacingAndGlyphs" fill="#1a1a1a" stroke-width=".25">10</text><path d="M283.9 588.95H287.4" stroke="#707070" stroke-width="1"/><text x="282.59999999999997" y="592.45" text-anchor="end" textLength="9.5" lengthAdjust="spacingAndGlyphs" fill="#1a1a1a" stroke-width=".25">15</text><path d="M283.9 560.2H287.4" stroke="#707070" stroke-width="1"/><text x="282.59999999999997" y="563.7" text-anchor="end" textLength="9.5" lengthAdjust="spacingAndGlyphs" fill="#1a1a1a" stroke-width=".25">20</text><path d="M283.9 531.45H287.4" stroke="#707070" stroke-width="1"/><text x="282.59999999999997" y="534.95" text-anchor="end" textLength="9.5" lengthAdjust="spacingAndGlyphs" fill="#1a1a1a" stroke-width=".25">25</text><path d="M283.9 502.7H287.4" stroke="#707070" stroke-width="1"/><text x="282.59999999999997" y="506.2" text-anchor="end" textLength="9.5" lengthAdjust="spacingAndGlyphs" fill="#1a1a1a" stroke-width=".25">30</text><text transform="translate(292.79999999999995 749.5) rotate(-90)" textLength="47" lengthAdjust="spacingAndGlyphs" fill="#1a1a1a" stroke-width=".25">2019-08-23</text><text transform="translate(305.64 749.5) rotate(-90)" textLength="47" lengthAdjust="spacingAndGlyphs" fill="#1a1a1a" stroke-width=".25">2019-08-26</text><text transform="translate(348.44 749.5) rotate(-90)" textLength="47" lengthAdjust="spacingAndGlyphs" fill="#1a1a1a" stroke-width=".25">2019-09-05</text><text transform="translate(416.91999999999996 749.5) rotate(-90)" textLength="47" lengthAdjust="spacingAndGlyphs" fill="#1a1a1a" stroke-width=".25">2019-09-21</text><text transform="translate(678.0 749.5) rotate(-90)" textLength="47" lengthAdjust="spacingAndGlyphs" fill="#1a1a1a" stroke-width=".25">2019-11-21</text><text transform="translate(819.24 749.5) rotate(-90)" textLength="47" lengthAdjust="spacingAndGlyphs" fill="#1a1a1a" stroke-width=".25">2019-12-24</text><path d="M289.4 675.2H678.88L815.34 502.7" stroke="#0808b0" stroke-width="2.1" fill="none" stroke-linejoin="round"/><circle cx="289.4" cy="675.5" r="1.9" fill="#06067c"/><circle cx="302.24" cy="675.5" r="1.9" fill="#06067c"/><circle cx="310.8" cy="675.5" r="1.9" fill="#06067c"/><circle cx="315.08" cy="675.5" r="1.9" fill="#06067c"/><circle cx="345.04" cy="675.5" r="1.9" fill="#06067c"/><circle cx="413.52" cy="675.5" r="1.9" fill="#06067c"/><circle cx="422.08" cy="675.5" r="1.9" fill="#06067c"/><circle cx="674.6" cy="675.5" r="1.9" fill="#06067c"/><circle cx="678.88" cy="675.5" r="1.9" fill="#06067c"/><circle cx="815.84" cy="503.0" r="1.9" fill="#06067c"/><rect x="282.15" y="658.7" width="14.5" height="13.5" fill="#fff" stroke="#3c3c3c" stroke-width="1" stroke-dasharray="1.3 1.3"/><text x="289.40" y="669.2" text-anchor="middle" font-size="10" fill="#1a1a1a" stroke-width=".2">0</text><rect x="294.99" y="658.7" width="14.5" height="13.5" fill="#fff" stroke="#3c3c3c" stroke-width="1" stroke-dasharray="1.3 1.3"/><text x="302.24" y="669.2" text-anchor="middle" font-size="10" fill="#1a1a1a" stroke-width=".2">0</text><rect x="303.55" y="658.7" width="14.5" height="13.5" fill="#fff" stroke="#3c3c3c" stroke-width="1" stroke-dasharray="1.3 1.3"/><text x="310.80" y="669.2" text-anchor="middle" font-size="10" fill="#1a1a1a" stroke-width=".2">0</text><rect x="307.83" y="658.7" width="14.5" height="13.5" fill="#fff" stroke="#3c3c3c" stroke-width="1" stroke-dasharray="1.3 1.3"/><text x="315.08" y="669.2" text-anchor="middle" font-size="10" fill="#1a1a1a" stroke-width=".2">0</text><rect x="337.79" y="658.7" width="14.5" height="13.5" fill="#fff" stroke="#3c3c3c" stroke-width="1" stroke-dasharray="1.3 1.3"/><text x="345.04" y="669.2" text-anchor="middle" font-size="10" fill="#1a1a1a" stroke-width=".2">0</text><rect x="406.27" y="658.7" width="14.5" height="13.5" fill="#fff" stroke="#3c3c3c" stroke-width="1" stroke-dasharray="1.3 1.3"/><text x="413.52" y="669.2" text-anchor="middle" font-size="10" fill="#1a1a1a" stroke-width=".2">0</text><rect x="414.83" y="658.7" width="14.5" height="13.5" fill="#fff" stroke="#3c3c3c" stroke-width="1" stroke-dasharray="1.3 1.3"/><text x="422.08" y="669.2" text-anchor="middle" font-size="10" fill="#1a1a1a" stroke-width=".2">0</text><rect x="667.35" y="658.7" width="14.5" height="13.5" fill="#fff" stroke="#3c3c3c" stroke-width="1" stroke-dasharray="1.3 1.3"/><text x="674.60" y="669.2" text-anchor="middle" font-size="10" fill="#1a1a1a" stroke-width=".2">0</text><rect x="671.63" y="658.7" width="14.5" height="13.5" fill="#fff" stroke="#3c3c3c" stroke-width="1" stroke-dasharray="1.3 1.3"/><text x="678.88" y="669.2" text-anchor="middle" font-size="10" fill="#1a1a1a" stroke-width=".2">0</text><rect x="805.55" y="486.2" width="20.5" height="13.5" fill="#fff" stroke="#3c3c3c" stroke-width="1" stroke-dasharray="1.3 1.3"/><text x="815.80" y="496.7" text-anchor="middle" font-size="10" fill="#1a1a1a" stroke-width=".2">30</text></svg>
<div class="t " style="left:888.00px;top:456.20px;font-size:10.8px;transform-origin:0 50%;transform:scaleX(0.871);">Flags</div>
<div class="t b" style="left:888.00px;top:469.80px;font-size:10.8px;transform-origin:0 50%;transform:scaleX(0.918);">Self Preserving, Event Count</div>
<div class="t b" style="left:888.00px;top:482.50px;font-size:10.8px;transform-origin:0 50%;transform:scaleX(0.897);">Statistical, Critical</div>
<svg class="a" style="left:888px;top:678px" width="11" height="11" viewBox="0 0 11 11"><rect x=".5" y=".5" width="10" height="10" fill="#fff" stroke="#333" stroke-width="1"/><path d="M2.300 5.600L4.500 7.800L8.700 2.800" fill="none" stroke="#222" stroke-width="1.200"/></svg>
<div class="t " style="left:902.00px;top:677.60px;font-size:10.8px;transform-origin:0 50%;transform:scaleX(0.898);">Show values</div>
<div class="a" style="left:888px;top:728px;width:150px;height:19.5px;background:#e1e1e1;border:1px solid #adadad"></div>
<div class="t " style="left:891.50px;top:732.60px;font-size:10.8px;transform-origin:0 50%;transform:scaleX(0.924);">Display data field</div>
<div class="a" style="left:228px;top:767.5px;width:796px;height:4.5px;background:#f0f0f0"></div>
</body></html>
